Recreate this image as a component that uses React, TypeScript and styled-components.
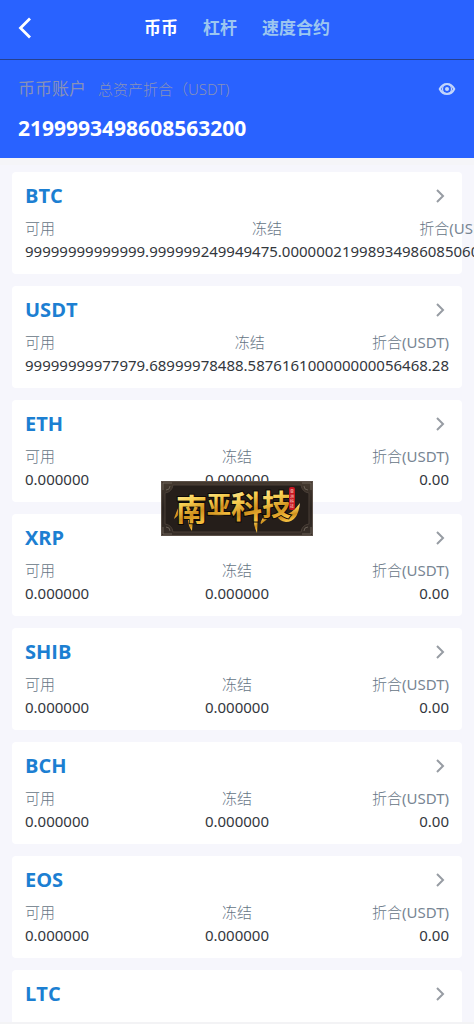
import React from "react";
import styled, { createGlobalStyle } from "styled-components";

const Global = createGlobalStyle`
  * { box-sizing: border-box; }
  body {
    margin: 0;
    background: #f6f6fc;
    font-family: "Noto Sans", "Noto Sans CJK SC", sans-serif;
  }
  button { border: 0; padding: 0; background: none; font: inherit; color: inherit; cursor: pointer; }
`;

const Page = styled.div`
  display: flex;
  flex-direction: column;
  height: 100vh;
  overflow: hidden;
  border-bottom: 2px solid #f3f3f5;
`;

const Header = styled.header`
  display: grid;
  grid-template-columns: 48px 1fr 48px;
  align-items: center;
  flex: none;
  height: 60px;
  padding-bottom: 3px;
  background: #2962ff;
  border-bottom: 1px solid #25408f;
`;

const BackButton = styled.button`
  display: flex;
  padding-left: 18px;
  color: #fff;
`;

const Tabs = styled.nav`
  display: flex;
  justify-content: center;
  gap: 25px;
`;

const Tab = styled.button<{ $active?: boolean }>`
  font-size: 17px;
  line-height: 24px;
  font-weight: 700;
  white-space: nowrap;
  color: ${(p) => (p.$active ? "#ffffff" : "#9cc6f0")};
`;

const Summary = styled.section`
  flex: none;
  padding: 16px 18px 15px;
  background: #2962ff;
`;

const SummaryRow = styled.div`
  display: flex;
  align-items: center;
  justify-content: space-between;
`;

const SummaryLabels = styled.div`
  display: flex;
  align-items: center;
  gap: 12px;
  line-height: 26px;
  color: #8791b8;
`;

const AccountName = styled.span`
  font-size: 17px;
`;

const AccountUnit = styled.span`
  font-size: 15px;
  font-weight: 300;
`;

const EyeButton = styled.button`
  display: flex;
  color: #c3d6fb;
`;

const Total = styled.div`
  margin-top: 11px;
  font-size: 21px;
  line-height: 30px;
  font-weight: 700;
  color: #fff;
`;

const List = styled.main`
  display: flex;
  flex: 1;
  flex-direction: column;
  gap: 12px;
  min-height: 0;
  padding: 7px 12px 0;
  border-top: 7px solid #f5f5f8;
  overflow: hidden;
`;

const Card = styled.article`
  flex: none;
  height: 102px;
  padding: 9px 13px 0;
  border-radius: 4px;
  background: #fff;
`;

const CardHead = styled.div`
  display: flex;
  align-items: center;
  justify-content: space-between;
  margin-bottom: 6px;
  color: #979ca3;
`;

const Symbol = styled.h2`
  margin: 0;
  font-family: "Open Sans", sans-serif;
  font-size: 20px;
  line-height: 30px;
  font-weight: 700;
  color: #1c7fd2;
`;

const Columns = styled.div`
  display: flex;
`;

const Column = styled.div<{ $align: "left" | "center" | "right" }>`
  flex: 1;
  font-size: 15px;
  line-height: 23px;
  white-space: nowrap;
  text-align: ${(p) => p.$align};
`;

const Label = styled.div`
  font-weight: 300;
  color: #667585;
`;

const Unit = styled.span`
  font-weight: 400;
  color: #788593;
`;

const Value = styled.div`
  color: #33373d;
`;

const Banner = styled.div`
  position: fixed;
  left: 50%;
  top: 481px;
  width: 152px;
  height: 55px;
  margin-left: -76px;
`;

type Coin = { symbol: string; amounts?: [string, string, string] };

const empty: [string, string, string] = ["0.000000", "0.000000", "0.00"];

const coins: Coin[] = [
  { symbol: "BTC", amounts: ["99999999999999.999999", "249949475.000000", "2199893498608506000"] },
  { symbol: "USDT", amounts: ["99999999977979.689999", "78488.587616", "100000000056468.28"] },
  { symbol: "ETH", amounts: empty },
  { symbol: "XRP", amounts: empty },
  { symbol: "SHIB", amounts: empty },
  { symbol: "BCH", amounts: empty },
  { symbol: "EOS", amounts: empty },
  { symbol: "LTC" },
];

const Chevron = () => (
  <svg width="18" height="18" viewBox="0 0 18 18" fill="none" stroke="currentColor" strokeWidth="2">
    <path d="M6 3l6 6-6 6" />
  </svg>
);

const Eye = () => (
  <svg width="18" height="14" viewBox="0 0 18 14" fill="none" stroke="currentColor">
    <path d="M1.8 7Q4.2 2 9 2T16.2 7Q13.800 12 9 12T1.8 7Z" strokeWidth="2.2" strokeLinejoin="round" />
    <circle cx="9" cy="7" r="4.500" strokeWidth="1.200" />
    <circle cx="9" cy="7" r="2" fill="currentColor" stroke="none" />
  </svg>
);

const Plaque = () => (
  <svg width="152" height="55" viewBox="0 0 152 55" role="img" aria-label="南亚科技">
    <defs>
      <linearGradient id="gold" x1="0" y1="0" x2="0.3" y2="1">
        <stop offset="0" stopColor="#fffac8" />
        <stop offset="0.45" stopColor="#f8d052" />
        <stop offset="0.75" stopColor="#cf8f1c" />
        <stop offset="1" stopColor="#f6c040" />
      </linearGradient>
      <linearGradient id="wood" x1="0" y1="0" x2="0" y2="1">
        <stop offset="0" stopColor="#44392f" />
        <stop offset="0.5" stopColor="#2b2420" />
        <stop offset="1" stopColor="#372e28" />
      </linearGradient>
    </defs>
    <rect width="152" height="55" fill="#5b5048" />
    <rect x="1" y="1" width="150" height="53" fill="url(#wood)" />
    <path
      d="M12 4H140Q141 11 148 12V43Q141 44 140 51H12Q11 44 4 43V12Q11 11 12 4Z"
      fill="#251e1a"
      stroke="#4a3f37"
    />
    <g fill="none" stroke="#74695f" strokeWidth="0.8">
      <path d="M2 9V2H11M5 9Q9 9 9 5M141 2H150V9M143 5Q143 9 147 9M2 46V53H11M5 46Q9 46 9 50M150 46V53H141M147 46Q143 46 143 50" />
    </g>
    <g fill="url(#gold)">
      <path d="M19 23Q14 34 13 38Q20 33 21 24Z" />
      <path d="M27 38L32 36L31 50Q27 45 27 38Z" />
      <path d="M48 33Q58 30 66 33Q58 37 48 33Z" />
      <path d="M93 34L97 33L96 52Q92 44 93 34Z" />
      <path d="M104 34Q98 42 100 43Q106 39 110 33Z" />
      <path d="M114 33Q127 39 139 22Q137 41 125 41Q118 40 114 33Z" />
    </g>
    <g
      fontFamily="'Noto Sans CJK SC', sans-serif"
      fontWeight="700"
      fill="url(#gold)"
      stroke="#0c0806"
      strokeWidth="2"
      paintOrder="stroke"
    >
      <text x="15" y="40" fontSize="31">南</text>
      <text x="46" y="32" fontSize="24">亚</text>
      <text x="70" y="37" fontSize="31">科</text>
      <text x="101" y="35" fontSize="29">技</text>
    </g>
    <rect x="128" y="6" width="6" height="23" rx="2" fill="#c51620" />
    <g fontFamily="'Noto Sans CJK SC', sans-serif" fontSize="4" fill="#ffd9d0">
      <text x="129" y="12">亚</text>
      <text x="129" y="17">洲</text>
      <text x="129" y="22">科</text>
      <text x="129" y="27">技</text>
    </g>
  </svg>
);

export default function App() {
  return (
    <Page>
      <Global />
      <Header>
        <BackButton aria-label="返回">
          <svg width="14" height="22" viewBox="0 0 14 22" fill="none" stroke="currentColor" strokeWidth="2.8">
            <path d="M12 1.5L2.5 11L12 20.5" />
          </svg>
        </BackButton>
        <Tabs>
          <Tab $active>币币</Tab>
          <Tab>杠杆</Tab>
          <Tab>速度合约</Tab>
        </Tabs>
      </Header>
      <Summary>
        <SummaryRow>
          <SummaryLabels>
            <AccountName>币币账户</AccountName>
            <AccountUnit>总资产折合（USDT)</AccountUnit>
          </SummaryLabels>
          <EyeButton aria-label="隐藏金额">
            <Eye />
          </EyeButton>
        </SummaryRow>
        <Total>2199993498608563200</Total>
      </Summary>
      <List>
        {coins.map(({ symbol, amounts }) => (
          <Card key={symbol}>
            <CardHead>
              <Symbol>{symbol}</Symbol>
              <Chevron />
            </CardHead>
            {amounts && (
              <Columns>
                <Column $align="left">
                  <Label>可用</Label>
                  <Value>{amounts[0]}</Value>
                </Column>
                <Column $align="center">
                  <Label>冻结</Label>
                  <Value>{amounts[1]}</Value>
                </Column>
                <Column $align="right">
                  <Label>
                    折合<Unit>(USDT)</Unit>
                  </Label>
                  <Value>{amounts[2]}</Value>
                </Column>
              </Columns>
            )}
          </Card>
        ))}
      </List>
      <Banner>
        <Plaque />
      </Banner>
    </Page>
  );
}
